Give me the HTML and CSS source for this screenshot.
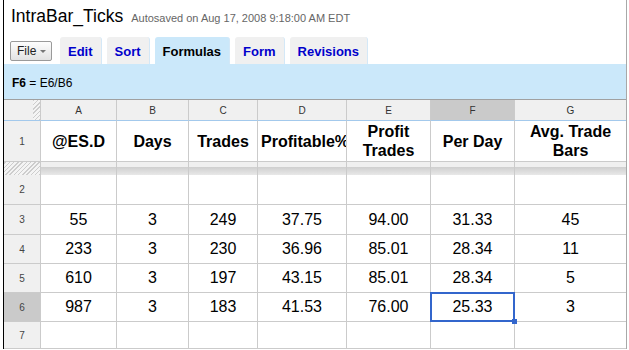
FILE: index.html
```html
<!DOCTYPE html>
<html lang="en">
<head>
    <meta charset="UTF-8">
    <meta name="viewport" content="width=device-width, initial-scale=1.0">
    <title>IntraBar_Ticks</title>
    <link rel="stylesheet" href="styles.css">
</head>
<body>
<div class="sheet">
    <div class="top">
        <div class="title-row">
            <h1 class="title">IntraBar_Ticks</h1>
            <span class="saved">Autosaved on Aug 17, 2008 9:18:00 AM EDT</span>
        </div>
        <div class="tabs">
            <button class="file-btn">File <span class="arrow"></span></button>
            <div class="tab">Edit</div>
            <div class="tab">Sort</div>
            <div class="tab active">Formulas</div>
            <div class="tab">Form</div>
            <div class="tab">Revisions</div>
        </div>
    </div>

    <div class="formula"><b>F6</b> = E6/B6</div>

    <div class="grid">
        <!-- column letters -->
        <div class="c ch corner"></div>
        <div class="c ch">A</div>
        <div class="c ch">B</div>
        <div class="c ch">C</div>
        <div class="c ch">D</div>
        <div class="c ch">E</div>
        <div class="c ch on">F</div>
        <div class="c ch">G</div>

        <!-- row 1: frozen header -->
        <div class="c rh">1</div>
        <div class="c hd">@ES.D</div>
        <div class="c hd">Days</div>
        <div class="c hd">Trades</div>
        <div class="c hd">Profitable%</div>
        <div class="c hd">Profit<br>Trades</div>
        <div class="c hd">Per Day</div>
        <div class="c hd">Avg. Trade<br>Bars</div>

        <!-- freeze bar -->
        <div class="c fz grip"></div>
        <div class="c fz"></div>
        <div class="c fz"></div>
        <div class="c fz"></div>
        <div class="c fz"></div>
        <div class="c fz"></div>
        <div class="c fz"></div>
        <div class="c fz"></div>

        <div class="c rh">2</div>
        <div class="c"></div>
        <div class="c"></div>
        <div class="c"></div>
        <div class="c"></div>
        <div class="c"></div>
        <div class="c"></div>
        <div class="c"></div>

        <div class="c rh">3</div>
        <div class="c">55</div>
        <div class="c">3</div>
        <div class="c">249</div>
        <div class="c">37.75</div>
        <div class="c">94.00</div>
        <div class="c">31.33</div>
        <div class="c">45</div>

        <div class="c rh">4</div>
        <div class="c">233</div>
        <div class="c">3</div>
        <div class="c">230</div>
        <div class="c">36.96</div>
        <div class="c">85.01</div>
        <div class="c">28.34</div>
        <div class="c">11</div>

        <div class="c rh">5</div>
        <div class="c">610</div>
        <div class="c">3</div>
        <div class="c">197</div>
        <div class="c">43.15</div>
        <div class="c">85.01</div>
        <div class="c">28.34</div>
        <div class="c">5</div>

        <div class="c rh on">6</div>
        <div class="c">987</div>
        <div class="c">3</div>
        <div class="c">183</div>
        <div class="c">41.53</div>
        <div class="c">76.00</div>
        <div class="c sel">25.33</div>
        <div class="c">3</div>

        <div class="c rh">7</div>
        <div class="c"></div>
        <div class="c"></div>
        <div class="c"></div>
        <div class="c"></div>
        <div class="c"></div>
        <div class="c"></div>
        <div class="c"></div>
    </div>
</div>
</body>
</html>
```

FILE: styles.css
```css
body {
    margin: 0;
    font-family: "Liberation Sans", Arial, sans-serif;
    background: #fff;
    color: #000;
}
.sheet {
    margin-left: 3px;
    width: 622px;
    border-left: 1px solid #000;
    border-right: 1px solid #a8a8a8;
}
.top {
    height: 64px;
    display: flex;
    flex-direction: column;
    justify-content: space-between;
}
.title-row {
    display: flex;
    align-items: baseline;
    gap: 8px;
    padding: 6px 0 0 7px;
}
.title {
    margin: 0;
    font-size: 17.5px;
    line-height: 20px;
    font-weight: normal;
}
.saved {
    font-size: 11px;
    color: #666;
}
.tabs {
    display: flex;
    align-items: flex-end;
    padding-left: 6px;
}
.file-btn {
    box-sizing: border-box;
    width: 42px;
    height: 20px;
    margin: 0 8px 3px 0;
    padding: 0 5px 0 6px;
    display: flex;
    align-items: center;
    gap: 4px;
    font-family: inherit;
    font-size: 12px;
    color: #222;
    border: 1px solid #9a9a9a;
    border-radius: 2px;
    background: linear-gradient(#fdfdfd, #e2e2e2);
}
.arrow {
    width: 0;
    height: 0;
    border-left: 3px solid transparent;
    border-right: 3px solid transparent;
    border-top: 3px solid #777;
}
.tab {
    padding: 7px 8px 5px 8px;
    line-height: 15px;
    font-size: 13px;
    font-weight: bold;
    color: #0000cc;
    background: #f0f0f0;
    border-radius: 3px 3px 0 0;
    border-right: 1px solid #d4e8f7;
    margin-right: 5px;
}
.tab.active {
    background: #cbe8fa;
    color: #000;
}
.formula {
    box-sizing: border-box;
    height: 36px;
    padding: 12px 0 0 8px;
    font-size: 12px;
    line-height: 14px;
    background: #cbe8fa;
    border-bottom: 1px solid #a0a0a0;
}
.grid {
    display: grid;
    grid-template-columns: 37px 76px 72px 69px 89px 84px 84px 111px;
    grid-template-rows: 21px 41px 13px 30px 30px 29px 29px 29px 27px;
}
.c {
    box-sizing: border-box;
    border-right: 1px solid #cbcbcb;
    border-bottom: 1px solid #cbcbcb;
    display: flex;
    flex-direction: column;
    justify-content: center;
    text-align: center;
    white-space: nowrap;
    font-size: 16px;
}
.c:nth-child(8n) {
    border-right: 0;
}
.ch {
    background: #f0f0f0;
    font-size: 10px;
    color: #333;
    border-bottom-color: #a3c9ec;
}
.corner {
    background: repeating-linear-gradient(-45deg, #cdcdcd 0 1px, #f4f4f4 1px 3px) right / 7px 100% no-repeat, #f0f0f0;
}
.rh {
    background: #f0f0f0;
    font-size: 10px;
    color: #444;
}
.on {
    background: #cacaca;
}
.hd {
    font-weight: bold;
    line-height: 19px;
    padding: 0 3px;
    overflow: hidden;
}
.fz {
    border-bottom: 0;
    background: linear-gradient(#f0f0f0 0 5px, #cfcfcf 5px, #e8e8e8);
}
.grip {
    background: repeating-linear-gradient(-45deg, #cdcdcd 0 1px, #f4f4f4 1px 3px);
}
.sel {
    position: relative;
}
.sel::before {
    content: "";
    position: absolute;
    top: -1px;
    left: -1px;
    right: -1px;
    bottom: -1px;
    border: 2px solid #3366cc;
    z-index: 1;
}
.sel::after {
    content: "";
    position: absolute;
    right: -3px;
    bottom: -3px;
    width: 5px;
    height: 5px;
    background: #3366cc;
    z-index: 2;
}
```
